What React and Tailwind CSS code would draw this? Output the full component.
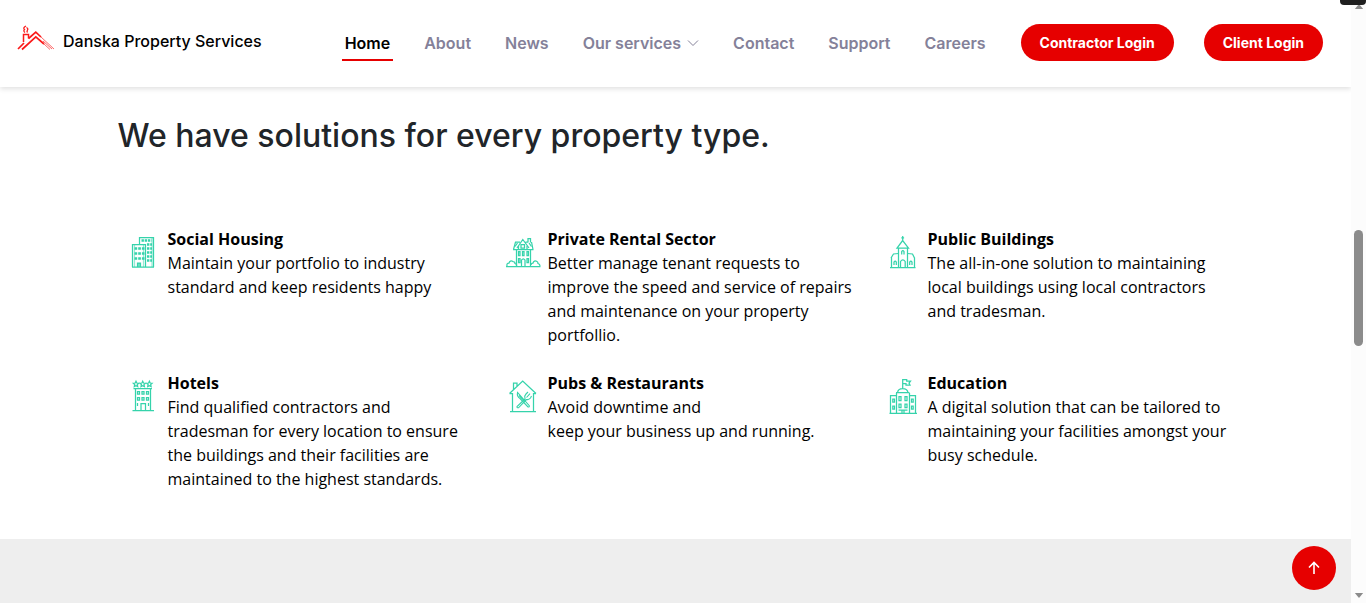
import React from "react";

const navItems = ["Home", "About", "News", "Our services", "Contact", "Support", "Careers"];

function Icon({ children }) {
  return (
    <svg viewBox="0 0 36 36" className="h-9 w-9" fill="none" stroke="#35d3ab" strokeWidth="1.25" aria-hidden="true">
      {children}
    </svg>
  );
}

function TowersIcon() {
  return (
    <Icon>
      <path d="M14.500 10.500v-7h14V33M7.500 33V10.500h13V33M7 33h22M12.500 33v-4h3v4M14 29v4" />
      <path d="M9.500 11v22M27 4v29M18.500 11v22" strokeOpacity=".5" />
      <path d="M16.500 6.500h10M22 10.500h5M22 14.500h5M22 18.500h5M22 22.500h5M22 26.500h5" strokeWidth="2.4" strokeDasharray="2.4 .8" />
      <path d="M9.500 14.500h10M9.500 19.500h10M9.500 24.500h10" strokeWidth="2.6" strokeDasharray="2.7 1" />
    </Icon>
  );
}

function HouseIcon() {
  return (
    <Icon>
      <path d="M1 32.500h34.500M11.500 32V15.500M25.500 32V15.500M8.500 15.500L10.500 8h4.500M8 15.500h20.500M28 15.500L26.500 8M12 14l5.800-8.500L24 14M20.500 8H23M23 8.500V4.500h2.500v4" />
      <path d="M10 12.500l2.500-3.500M26.500 12.500L24 9M16 10.500h3.500v3.500H16zM13.500 12v3M22 12v3" />
      <path d="M13.500 17.500h1.500v4h-1.500zM17.500 17.500H19v4h-1.500zM22 17.500h1.500v4H22zM13.500 24.500h1.500v4h-1.500zM22 24.500h1.500v4H22zM16.500 32v-6q1.800-2.500 3.500 0V32" />
      <path d="M2 32q-.5-3 2-3 1-3 4-1.500 2 0 2 2 2 .5 1.500 2.500M26 31q0-2 2-2 1-3 4-1.500 1 .5 1 2 2 .5 2 2.500" />
    </Icon>
  );
}

function ChurchIcon() {
  return (
    <Icon>
      <path d="M17.700 2v4.500M16.300 3.800h2.800M17.700 6.500l-5.700 7.500h11.500zM13.500 14v19M22.500 14v19M5 33.500h25.500" />
      <path d="M13.500 19.500L8.500 20l-2.500 4M22.500 19.500l5 .5 2 4M6.500 23.500v10M29.500 23.500v10" />
      <path d="M15.500 33v-5.500q2.300-3.500 4.700 0V33M16.700 20.500v-3q1.200-2 2.300 0v3M9 31v-3q1.200-2 2.300 0v3M24.700 31v-3q1.200-2 2.300 0v3" />
    </Icon>
  );
}

function HotelIcon() {
  return (
    <Icon>
      {[11, 17.7, 24.4].map((x) => (
        <path key={x} d="M0-2.700l.8 1.700 1.900.2-1.400 1.300.4 2L0 1.600l-1.700.9.4-2-1.400-1.300 1.900-.2z" transform={`translate(${x} 6)`} />
      ))}
      <path d="M8.500 10.500h18.500M10.500 11v21.500M25.500 11v21.500M7.500 32.500h21.500" />
      <path d="M12.500 13.500h2v2.500h-2zM17 13.500h2v2.500h-2zM21.500 13.500h2v2.500h-2zM12.500 19.500h2V22h-2zM17 19.500h2V22h-2zM21.500 19.500h2V22h-2zM12.500 25v3M23.500 25v3M16 32v-6.500h4.500V32" />
    </Icon>
  );
}

function RestaurantIcon() {
  return (
    <Icon>
      <path d="M4.500 15.500L17.700 3l13.300 12.500M4.500 15.500H7.500V33M31 15.500h-2.500V33M5 33.500h26M8.500 11.500V5h3.500v3.500" />
      <path d="M12.500 14.500q-.8 4 2.500 6l8 8.500q1.500.3 1.300-1.300zM14 17.500l5 5" strokeWidth="1.1" />
      <path d="M20.500 20.500l-8.500 8q-.2 1.500 1.500 1.300l8-8.300M20 20.500q-1-2.500 1-4.500l2-2M21.500 21.500q2.500.5 4-1.500l1-2M21.500 19.500l3.500-3.800" strokeWidth="1.1" />
    </Icon>
  );
}

function SchoolIcon() {
  return (
    <Icon>
      <path d="M17.700 10.500V1.500h4v1.500h3.800l-1.500 2 1 2h-4V5.500h-3M12.500 14.500q.5-4 5.200-4t5.300 4M11 14.500h13.500M11.500 15v20M24.500 15v20M4.500 35.300h27.500" />
      <path d="M11.500 17.500h-6v17.500M24.500 17.500h6v17.500" />
      <path d="M7.800 21h1.700v3H7.800zM26.500 21h1.700v3h-1.700zM7.800 28h1.700v3H7.800zM26.500 28h1.700v3h-1.700zM14 18.500h2v4h-2zM20 18.500h2v4h-2zM14 26h2v3.500h-2zM20 26h2v3.500h-2zM17 35v-3h2v3M13.500 32h9" />
    </Icon>
  );
}

const solutions = [
  { title: "Social Housing", icon: TowersIcon, text: "Maintain your portfolio to industry standard and keep residents happy" },
  { title: "Private Rental Sector", icon: HouseIcon, text: "Better manage tenant requests to improve the speed and service of repairs and maintenance on your property portfollio." },
  { title: "Public Buildings", icon: ChurchIcon, text: "The all-in-one solution to maintaining local buildings using local contractors and tradesman." },
  { title: "Hotels", icon: HotelIcon, text: "Find qualified contractors and tradesman for every location to ensure the buildings and their facilities are maintained to the highest standards." },
  { title: "Pubs & Restaurants", icon: RestaurantIcon, text: "Avoid downtime and\nkeep your business up and running." },
  { title: "Education", icon: SchoolIcon, text: "A digital solution that can be tailored to maintaining your facilities amongst your busy schedule." },
];

function Logo() {
  return (
    <svg viewBox="0 -1 38 28" className="h-7 w-[38px]" fill="none" stroke="#fb1a1a" aria-hidden="true">
      <path d="M6.500 17V9.500h5v4" strokeWidth="1.500" />
      <path d="M1 24L7 18M5 24.500L18.800 11.800 27 19" strokeWidth="1.700" />
      <path d="M11.500 13.500L18.800 7.200 24 12" strokeWidth="1.700" />
      <path d="M24 12L37 24M27 19L33 24.500M26 16l9 8" strokeWidth="1" strokeOpacity=".65" />
      <path d="M8 7.500q-2-1.500-.5-3-2-1.500 1.500-3.500M10.500 7.500q-1-1 0-2.500 1-1.500-1-2.500" strokeWidth="1.300" />
    </svg>
  );
}

function Header() {
  return (
    <header className="relative flex h-[87px] items-start justify-between bg-white pr-7 pl-[17px] font-['Inter',sans-serif] shadow-[0_2px_5px_rgba(0,0,0,0.12)]">
      <a href="#home" className="flex items-start gap-2 pt-6 text-base font-medium text-black">
        <Logo />
        <span className="pt-[5px]">Danska Property Services</span>
      </a>
      <div className="flex items-start pt-6">
        <nav className="mr-8 flex gap-7">
          {navItems.map((item, i) => (
            <a
              key={item}
              href="#home"
              className={`flex h-[37px] items-center gap-1.5 border-b-2 px-[3px] pt-0.5 text-base font-semibold ${i === 0 ? "border-[#e60000] text-black" : "border-transparent text-[#848199]"}`}
            >
              {item}
              {item === "Our services" && (
                <svg viewBox="0 0 12 8" className="h-2 w-3" fill="none" stroke="currentColor" aria-hidden="true">
                  <path d="M1 1.500l5 5 5-5" />
                </svg>
              )}
            </a>
          ))}
        </nav>
        <div className="flex gap-[30px]">
          <button className="h-[37px] rounded-full bg-[#e60000] px-[19px] pt-px text-sm font-bold text-white">Contractor Login</button>
          <button className="h-[37px] rounded-full bg-[#e60000] px-[19px] pt-px text-sm font-bold text-white">Client Login</button>
        </div>
      </div>
    </header>
  );
}

function Scrollbar() {
  return (
    <div className="relative flex w-[15px] shrink-0 flex-col items-center bg-[#fcfcfc]" aria-hidden="true">
      <svg viewBox="0 0 10 6" className="mt-1 h-[5px] w-2.5" fill="#8b8b8b"><path d="M0 6l5-6 5 6z" /></svg>
      <div className="mt-[221px] h-[116px] w-[9px] rounded-full bg-[#8b8b8b]" />
      <svg viewBox="0 0 10 6" className="mt-auto mb-[5px] h-[5px] w-2.5" fill="#8b8b8b"><path d="M0 0l5 6 5-6z" /></svg>
      <div className="absolute top-0 right-0 h-[5px] w-[26px] rounded-b bg-[#1f1f1f]" />
    </div>
  );
}

export default function App() {
  return (
    <div className="flex min-h-screen bg-white">
      <div className="flex min-w-0 flex-1 flex-col">
        <Header />
        <main className="mx-auto w-full max-w-[1140px] px-3 pt-7 pb-12 font-['Open_Sans',sans-serif] text-black">
          <h2 className="font-['Inter',sans-serif] text-[32px] leading-[42px] font-medium text-[#212529]">
            We have solutions for every property type.
          </h2>
          <div className="mt-[70px] grid grid-cols-3 gap-6">
            {solutions.map(({ title, icon: Glyph, text }) => (
              <article key={title} className="flex">
                <div className="flex w-[50px] shrink-0 justify-center pt-[7px]">
                  <Glyph />
                </div>
                <div className="min-w-0">
                  <h3 className="text-base leading-6 font-bold">{title}</h3>
                  <p className="text-base leading-6 whitespace-pre-line">{text}</p>
                </div>
              </article>
            ))}
          </div>
        </main>
        <footer className="min-h-16 flex-1 bg-[#eeeeee]" />
      </div>
      <Scrollbar />
      <button aria-label="Back to top" className="fixed right-[30px] bottom-[13px] flex h-11 w-11 items-center justify-center rounded-full bg-[#e60000]">
        <svg viewBox="0 0 12 14" className="h-3.5 w-3" fill="none" stroke="white" strokeWidth="1.600" aria-hidden="true">
          <path d="M6 13V2M1 6.500L6 1.500l5 5" />
        </svg>
      </button>
    </div>
  );
}
